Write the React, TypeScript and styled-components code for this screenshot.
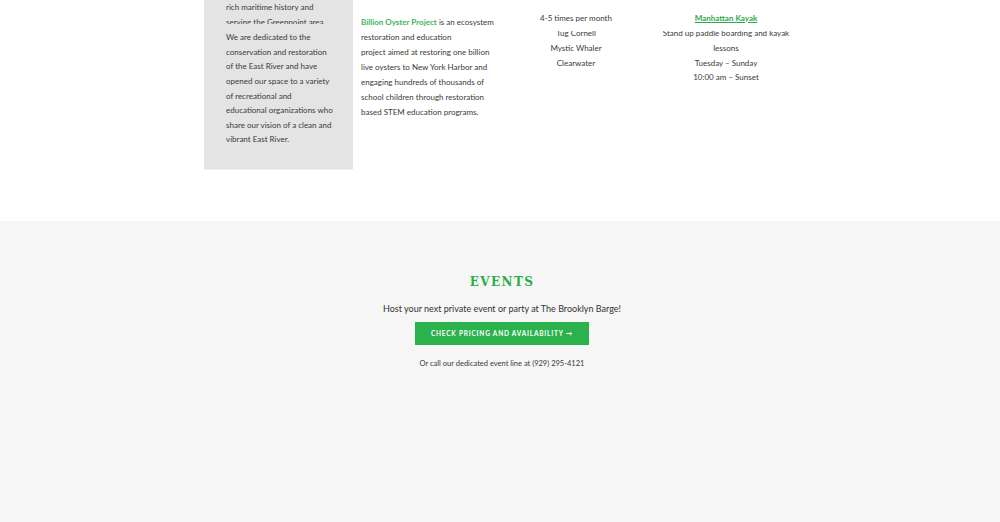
import React from 'react';
import styled, { createGlobalStyle } from 'styled-components';

export default function App() {
  return (
    <>
      <GlobalStyle />
      <Page>
        <Programs>
          <Columns>
            <AboutPanel>
              <Clip $height={24}>
                <Line>rich maritime history and</Line>
                <Line>serving the Greenpoint area</Line>
              </Clip>
              <Paragraph>
                <Line>We are dedicated to the</Line>
                <Line>conservation and restoration</Line>
                <Line>of the East River and have</Line>
                <Line>opened our space to a variety</Line>
                <Line>of recreational and</Line>
                <Line>educational organizations who</Line>
                <Line>share our vision of a clean and</Line>
                <Line>vibrant East River.</Line>
              </Paragraph>
            </AboutPanel>

            <PartnerColumn>
              <Line>
                <Highlight>Billion Oyster Project</Highlight> is an ecosystem
              </Line>
              <Line>restoration and education</Line>
              <Line>project aimed at restoring one billion</Line>
              <Line>live oysters to New York Harbor and</Line>
              <Line>engaging hundreds of thousands of</Line>
              <Line>school children through restoration</Line>
              <Line>based STEM education programs.</Line>
            </PartnerColumn>

            <ScheduleColumn>
              <Line>4-5 times per month</Line>
              <Clip $height={9.3} $offset={5.3}>
                <Line>Tug Cornell</Line>
              </Clip>
              <Line>Mystic Whaler</Line>
              <Line>Clearwater</Line>
            </ScheduleColumn>

            <ScheduleColumn>
              <Line>
                <PartnerLink href="#">Manhattan Kayak</PartnerLink>
              </Line>
              <Clip $height={9.3} $offset={5.3}>
                <Line>Stand up paddle boarding and kayak</Line>
              </Clip>
              <Line>lessons</Line>
              <Line>Tuesday – Sunday</Line>
              <Line>10:00 am – Sunset</Line>
            </ScheduleColumn>
          </Columns>
        </Programs>

        <Events>
          <EventsTitle>Events</EventsTitle>
          <Lead>Host your next private event or party at The Brooklyn Barge!</Lead>
          <CtaButton href="#">Check pricing and availability →</CtaButton>
          <Note>Or call our dedicated event line at (929) 295-4121</Note>
        </Events>
      </Page>
    </>
  );
}

const GlobalStyle = createGlobalStyle`
  html, body {
    margin: 0;
    padding: 0;
    background: #ffffff;
  }

  body {
    font-family: Lato, 'Open Sans', sans-serif;
    color: #3a3a3a;
  }
`;

const Page = styled.div`
  display: flex;
  flex-direction: column;
  min-height: 522px;
`;

const Programs = styled.section`
  display: flex;
  justify-content: center;
  height: 221px;
  background: #ffffff;
  padding-left: 5px;
`;

const Columns = styled.div`
  display: grid;
  grid-template-columns: 149px 148px 150px 150px;
  align-items: start;
`;

const Line = styled.div`
  font-size: 8px;
  line-height: 14.6px;
  white-space: nowrap;
`;

const Clip = styled.div<{ $height: number; $offset?: number }>`
  height: ${(p) => p.$height}px;
  overflow: hidden;

  & > ${Line}:first-child {
    margin-top: ${(p) => -(p.$offset ?? 0)}px;
  }
`;

const AboutPanel = styled.div`
  height: 169px;
  box-sizing: border-box;
  padding: 0 22px;
  background: #e4e4e4;
  box-shadow: 0 1px 1px rgba(0, 0, 0, 0.04);
`;

const Paragraph = styled.div`
  margin-top: 6.2px;
`;

const PartnerColumn = styled.div`
  padding: 14.5px 0 0 8px;

  & > ${Line} {
    line-height: 15px;
  }
`;

const ScheduleColumn = styled.div`
  display: flex;
  flex-direction: column;
  align-items: center;
  padding-top: 10.7px;

  & > ${Line} {
    line-height: 14.8px;
  }

  & > ${Clip} {
    margin-top: 6px;
    align-self: stretch;
    text-align: center;
  }
`;

const Highlight = styled.span`
  color: #3db55b;
  font-weight: 700;
`;

const PartnerLink = styled.a`
  color: #2eaa4a;
  font-weight: 700;
  text-decoration: underline;
`;

const Events = styled.section`
  flex: 1;
  display: flex;
  flex-direction: column;
  align-items: center;
  padding: 53px 0 0 4px;
  background: #f6f6f6;
`;

const EventsTitle = styled.h2`
  margin: 0;
  font-family: 'DejaVu Serif', 'Liberation Serif', serif;
  font-weight: 700;
  font-size: 12px;
  line-height: 16px;
  letter-spacing: 1.4px;
  text-transform: uppercase;
  color: #27ae48;
`;

const Lead = styled.p`
  margin: 12px 0 0;
  font-size: 9px;
  line-height: 14px;
  color: #333333;
`;

const CtaButton = styled.a`
  display: flex;
  align-items: center;
  justify-content: center;
  margin-top: 6px;
  width: 174px;
  height: 23px;
  background: #2bb24c;
  color: #ffffff;
  font-size: 6.5px;
  font-weight: 700;
  letter-spacing: 0.8px;
  text-transform: uppercase;
  text-decoration: none;
`;

const Note = styled.p`
  margin: 13px 0 0;
  font-size: 7.5px;
  line-height: 12px;
  color: #3a3a3a;
`;
